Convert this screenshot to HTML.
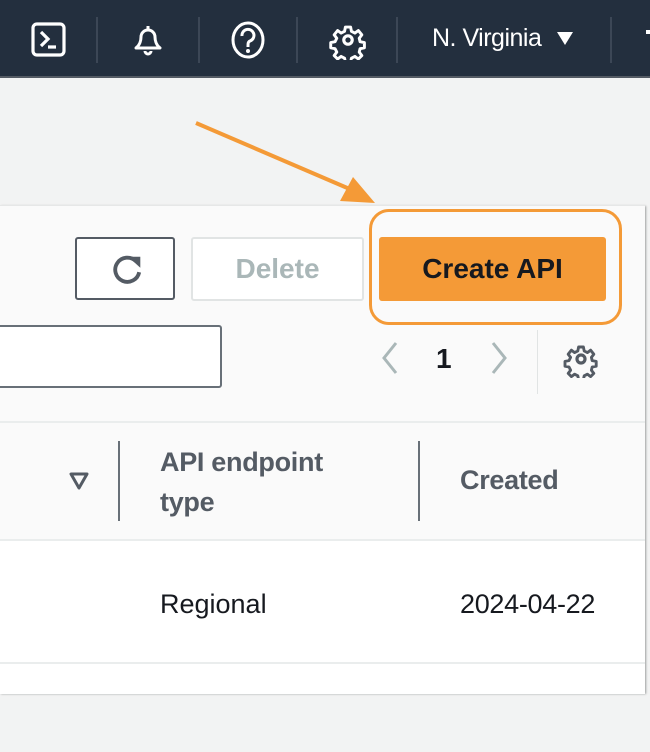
<!DOCTYPE html>
<html><head><style>
*{margin:0;padding:0;box-sizing:border-box}
body{width:650px;height:752px;background:#f2f3f3;font-family:"Liberation Sans",sans-serif;position:relative;overflow:hidden}
.abs{position:absolute}
.hdr{left:0;top:0;width:650px;height:78px;background:#232f3e;border-bottom:2px solid #545b64}
.sep{top:17px;width:2px;height:46px;background:#3c4756}
.panel{left:0;top:205px;width:645px;height:488px;background:#fafafa;box-shadow:1px 1px 2px rgba(0,0,0,.35);border-top:1px solid #e6e7e7}
</style></head><body>
<div class="abs hdr">
 <svg class="abs" style="left:30px;top:21px" width="38" height="38" viewBox="0 0 38 38"><rect x="3" y="3" width="31" height="31" rx="4" fill="none" stroke="#fff" stroke-width="3.2"/><path d="M11 11l7 7-7 7M18 26h8" fill="none" stroke="#fff" stroke-width="3.2"/></svg>
 <div class="abs sep" style="left:96px"></div>
 <svg class="abs" style="left:130px;top:22px" width="36" height="36" viewBox="0 0 36 36"><path d="M18 4v3M6 26c4-3 5-8 5-11a7 7 0 0 1 14 0c0 3 1 8 5 11z" fill="none" stroke="#fff" stroke-width="3" stroke-linejoin="round"/><path d="M15 29a3 3 0 0 0 6 0" fill="none" stroke="#fff" stroke-width="3"/></svg>
 <div class="abs sep" style="left:198px"></div>
 <svg class="abs" style="left:230px;top:21px" width="36" height="40" viewBox="0 0 36 40"><ellipse cx="18" cy="19" rx="15" ry="17" fill="none" stroke="#fff" stroke-width="3"/><path d="M12 15a6 6 0 1 1 8 5c-2 1-2 2-2 6" fill="none" stroke="#fff" stroke-width="3"/><circle cx="18" cy="30" r="2" fill="#fff"/></svg>
 <div class="abs sep" style="left:296px"></div>
 <svg class="abs" style="left:328px;top:20px" width="40" height="40" viewBox="0 0 38 38"><path d="M16 4h6l1 5 4 2 4-3 4 5-3 4 1 4 5 1v6l-5 1-1 4 3 4-4 4-4-3-4 2-1 5h-6l-1-5-4-2-4 3-4-4 3-4-2-4-5-1v-6l5-1 2-4-3-4 4-5 4 3 4-2z" transform="translate(19 19) scale(.82) translate(-19 -19)" fill="none" stroke="#fff" stroke-width="3.4" stroke-linejoin="round"/><circle cx="19" cy="19" r="4" fill="none" stroke="#fff" stroke-width="3"/></svg>
 <div class="abs sep" style="left:396px"></div>
 <div class="abs" style="left:432px;top:24px;color:#fff;font-size:25px;letter-spacing:-0.5px">N. Virginia</div>
 <svg class="abs" style="left:556px;top:31px" width="18" height="15"><path d="M1 1h16L9 14z" fill="#fff"/></svg>
 <div class="abs sep" style="left:610px"></div>
 <div class="abs" style="left:646px;top:30px;width:4px;height:4px;background:#fff"></div>
</div>
<svg class="abs" style="left:190px;top:115px" width="190" height="95"><path d="M6 8L162 75" stroke="#f49a37" stroke-width="4"/><path d="M150 86L185 88 163 62z" fill="#f49a37"/></svg>
<div class="abs panel">
 <div class="abs" style="left:75px;top:31px;width:100px;height:63px;border:2px solid #545b64;border-radius:3px;background:#fff"></div>
 <svg class="abs" style="left:104px;top:42px" width="44" height="44" viewBox="0 0 40 40"><path d="M29 12A11 11 0 1 0 32 22" fill="none" stroke="#545b64" stroke-width="3.5"/><path d="M22 8h11v10z" fill="#545b64"/></svg>
 <div class="abs" style="left:191px;top:31px;width:173px;height:64px;border:2px solid #e1e4e4;border-radius:3px;background:#fff;color:#aab7b8;font-weight:bold;font-size:28px;text-align:center;line-height:60px">Delete</div>
 <div class="abs" style="left:369px;top:3px;width:253px;height:116px;border:3px solid #f49a37;border-radius:20px"></div>
 <div class="abs" style="left:379px;top:31px;width:227px;height:64px;background:#f49a37;border-radius:3px;color:#16191f;font-weight:bold;font-size:28px;text-align:center;line-height:64px">Create API</div>
 <div class="abs" style="left:-5px;top:119px;width:227px;height:63px;border:2px solid #687078;border-radius:3px;background:#fff"></div>
 <svg class="abs" style="left:378px;top:134px" width="24" height="36"><path d="M18 3L6 18l12 15" fill="none" stroke="#aab7b8" stroke-width="3"/></svg>
 <div class="abs" style="left:436px;top:137px;font-size:28px;font-weight:bold;color:#16191f">1</div>
 <svg class="abs" style="left:487px;top:134px" width="24" height="36"><path d="M6 3l12 15L6 33" fill="none" stroke="#aab7b8" stroke-width="3"/></svg>
 <div class="abs" style="left:537px;top:124px;width:1px;height:64px;background:#e1e4e4"></div>
 <svg class="abs" style="left:562px;top:134px" width="38" height="38" viewBox="0 0 38 38"><path d="M16 4h6l1 5 4 2 4-3 4 5-3 4 1 4 5 1v6l-5 1-1 4 3 4-4 4-4-3-4 2-1 5h-6l-1-5-4-2-4 3-4-4 3-4-2-4-5-1v-6l5-1 2-4-3-4 4-5 4 3 4-2z" transform="translate(19 19) scale(.8) translate(-19 -19)" fill="none" stroke="#545b64" stroke-width="3.6" stroke-linejoin="round"/><circle cx="19" cy="19" r="4" fill="none" stroke="#545b64" stroke-width="3.2"/></svg>
 <div class="abs" style="left:0;top:215px;width:645px;height:2px;background:#eaeded"></div>
 <svg class="abs" style="left:69px;top:266px" width="20" height="18"><path d="M2 2h16L10 16z" fill="none" stroke="#545b64" stroke-width="3" stroke-linejoin="round"/></svg>
 <div class="abs" style="left:118px;top:235px;width:2px;height:80px;background:#687078"></div>
 <div class="abs" style="left:160px;top:236px;font-size:27px;font-weight:bold;color:#545b64;line-height:40px;letter-spacing:-0.3px">API endpoint<br>type</div>
 <div class="abs" style="left:418px;top:235px;width:2px;height:80px;background:#687078"></div>
 <div class="abs" style="left:460px;top:259px;font-size:27px;font-weight:bold;color:#545b64;letter-spacing:-0.3px">Created</div>
 <div class="abs" style="left:0;top:333px;width:645px;height:155px;background:#fff;border-top:2px solid #eaeded"></div>
 <div class="abs" style="left:160px;top:383px;font-size:27px;color:#16191f">Regional</div>
 <div class="abs" style="left:460px;top:383px;font-size:27px;color:#16191f;letter-spacing:-0.3px">2024-04-22</div>
 <div class="abs" style="left:0;top:456px;width:645px;height:2px;background:#eaeded"></div>
</div>
</body></html>
